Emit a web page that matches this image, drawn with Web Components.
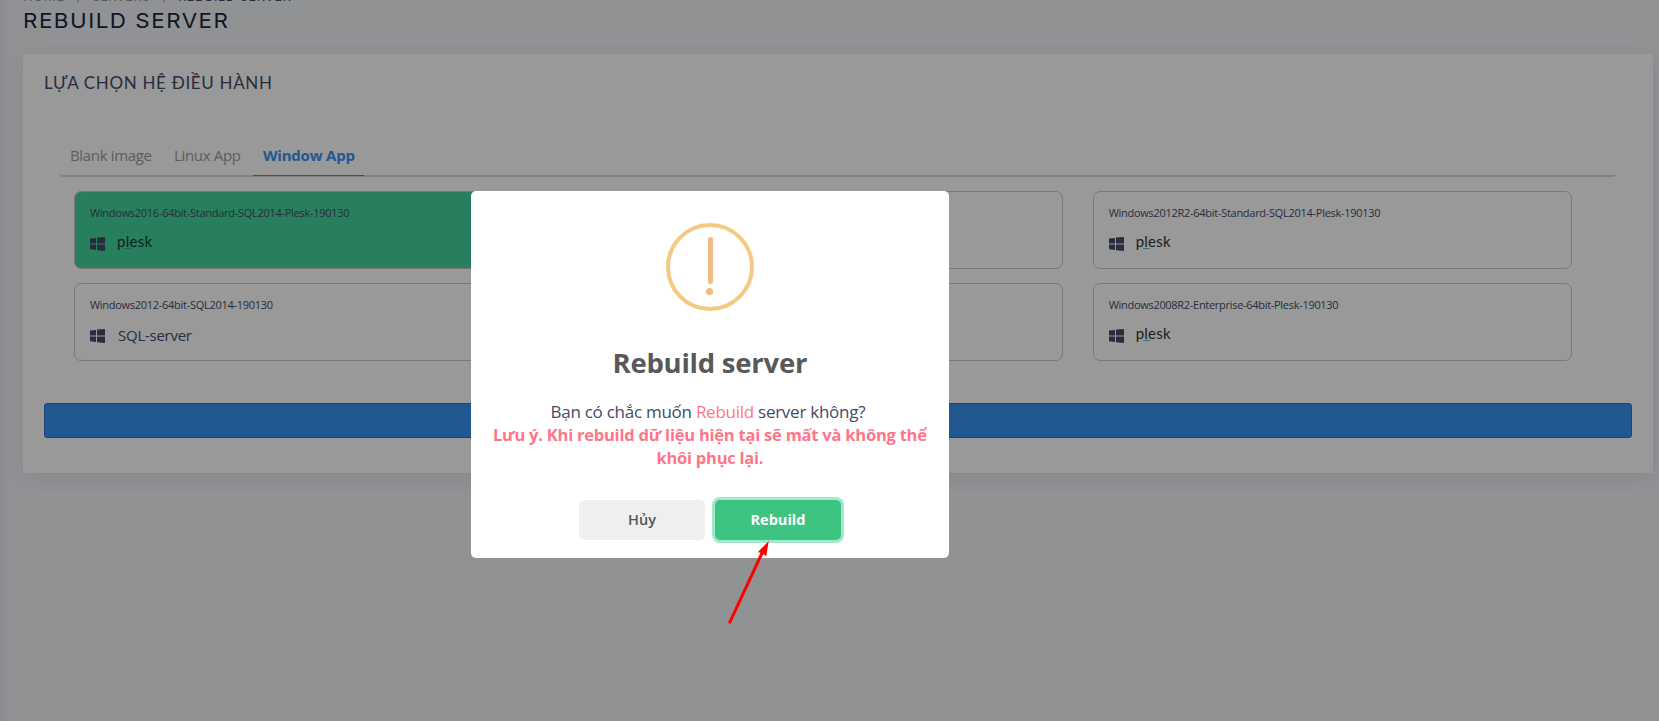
<!DOCTYPE html>
<html lang="vi">
<head>
<meta charset="utf-8">
<title>Rebuild server</title>
<style>
html,body{margin:0;height:100%;overflow:hidden;background:#f2f4f7;font-family:"Open Sans","Noto Sans",sans-serif;color:#434c66}
</style>
</head>
<body>
<rebuild-page></rebuild-page>
<script>
const define = (name, html, setup) => customElements.define(name, class extends HTMLElement {
  connectedCallback() {
    if (this.shadowRoot) return;
    const t = document.createElement('template');
    t.innerHTML = html;
    this.attachShadow({mode: 'open'}).append(t.content.cloneNode(true));
    if (setup) setup(this);
  }
});

/* One line of text, tracked so that it spans the given width; "x" widens the letters themselves. */
define('fit-text', `<style>:host{display:inline-block;white-space:nowrap;vertical-align:top}</style><slot></slot>`, el => {
  const x = parseFloat(el.getAttribute('x')) || 1;
  const target = parseFloat(el.getAttribute('w')) / x;
  const natural = el.getBoundingClientRect().width;
  const gap = (target - natural) / (el.textContent.length - 1);
  el.style.letterSpacing = gap.toFixed(4) + 'px';
  el.style.marginRight = (target * (x - 1) - gap).toFixed(4) + 'px';
  if (x !== 1) {
    el.style.transformOrigin = '0 0';
    el.style.transform = `scaleX(${x})`;
  }
});

define('crumb-bar', `<style>
:host{display:flex;height:16px;margin:-11px 0 0 23px;font:11.5px/16px Inter,sans-serif;color:#8d94a3}
.s{margin:0 12px 0 13px;width:3px} .c{color:#434c66}
</style><fit-text x="1.1" w="41">HOME</fit-text><span class="s">/</span><fit-text x="1.1" w="58">SERVERS</fit-text><span class="s">/</span><fit-text x="1.1" class="c" w="113">REBUILD SERVER</fit-text>`);

define('windows-icon', `<style>:host{display:block;width:15px;height:14px}svg{display:block}</style>
<svg width="15" height="14" viewBox="0 0 15 14"><path fill="#434c66" d="M0 1.6 6 .9V6.5H0ZM7 .4 15 0V6.5H7ZM0 7.4H6V13L0 12.3ZM7 7.4H15V14L7 13.2Z"/></svg>`);

define('plesk-logo', `<style>:host{display:block;position:relative;font:15px/20px Lato,"Open Sans",sans-serif;color:#333;width:36px;height:20px}
i{position:absolute;left:7px;top:17px;width:7px;height:1px;background:#53bce6}
:host([dim]){color:#0b3f2c}:host([dim]) i{background:#4f93b0}</style><fit-text w="35">plesk</fit-text><i></i>`);

define('image-card', `<style>
:host{display:block;box-sizing:border-box;height:78px;border:1px solid #ccc;border-radius:7px;padding:12px 15px 0}
:host([selected]){background:#44d49b}
.n{height:18px;font-size:11px;line-height:18px}
.r{display:flex;align-items:flex-start;margin-top:7px}
windows-icon{margin-top:8px;margin-right:12px}
.sql{display:block;margin:4px 0 0 1px;font-size:15px;line-height:20px}
plesk-logo{margin-top:2px}
</style><div class="n"><slot></slot></div><div class="r"></div>`, el => {
  const r = el.shadowRoot.querySelector('.r'), app = el.getAttribute('app');
  r.innerHTML = '<windows-icon></windows-icon>' + (app === 'sql'
    ? '<span class="sql"><fit-text w="74">SQL-server</fit-text></span>'
    : app === 'plesk' ? `<plesk-logo ${el.hasAttribute('selected') ? 'dim' : ''}></plesk-logo>` : '');
});

define('tab-bar', `<style>
:host{display:flex;box-sizing:border-box;height:37px;margin-left:15px;margin-right:16px;border-bottom:2px solid #dadada;border-radius:0 0 4px 4px;font-size:15px;line-height:30px;color:#9b9b9b}
div{height:36px;box-sizing:border-box;padding:0 11px}
.a{color:#3a93f2;font-weight:700;border-bottom:1px solid #3a93f2;width:111px;padding:0 10px;margin-left:1px}
</style><div><fit-text w="82">Blank image</fit-text></div><div><fit-text w="67">Linux App</fit-text></div><div class="a"><fit-text w="92">Window App</fit-text></div>`);

define('os-panel', `<style>
:host{display:block;box-sizing:border-box;width:1630px;height:419px;margin:0 0 0 23px;padding:17px 21px 0;background:#fff;box-shadow:0 5px 20px rgba(69,65,120,.1)}
h2{margin:0 0 45px;font:17px/24px Lato,"Open Sans",sans-serif;height:24px}
.grid{display:grid;grid-template-columns:repeat(3,1fr);gap:14px 30px;margin:14px 60px 0 30px}
.btn{box-sizing:border-box;height:35px;margin-top:42px;background:#3a93f2;border:1px solid #2d72c8;border-radius:3px}
</style>
<h2><fit-text w="228">LỰA CHỌN HỆ ĐIỀU HÀNH</fit-text></h2>
<tab-bar></tab-bar>
<div class="grid">
<image-card selected app="plesk"><fit-text w="259.5">Windows2016-64bit-Standard-SQL2014-Plesk-190130</fit-text></image-card>
<image-card></image-card>
<image-card app="plesk"><fit-text w="272">Windows2012R2-64bit-Standard-SQL2014-Plesk-190130</fit-text></image-card>
<image-card app="sql"><fit-text w="183">Windows2012-64bit-SQL2014-190130</fit-text></image-card>
<image-card></image-card>
<image-card app="plesk"><fit-text w="230">Windows2008R2-Enterprise-64bit-Plesk-190130</fit-text></image-card>
</div>
<div class="btn"></div>`);

define('warning-icon', `<style>:host{display:block;width:88px;height:88px}svg{display:block}</style>
<svg width="88" height="88" viewBox="0 0 88 88"><circle cx="44" cy="44" r="42" fill="none" stroke="#f4ca82" stroke-width="4"/><rect x="42" y="14" width="5" height="47" rx="2" fill="#f5ba85"/><circle cx="43.5" cy="68.5" r="3.6" fill="#f5ba85"/></svg>`);

define('confirm-dialog', `<style>
:host{display:flex;flex-direction:column;align-items:center;box-sizing:border-box;width:478px;height:367px;background:#fff;border-radius:5px;padding-top:32px}
h1{margin:33px 0 20px;font-size:27.5px;line-height:37px;height:36px;font-weight:700;color:#595959}
.t{display:flex;flex-direction:column;align-items:center;font-size:17px;line-height:23px;color:#434c66}
.t>fit-text{position:relative;left:-2px}
.t b,.t em{color:#ff7588;font-style:normal}.t b{font-weight:700;font-size:16.5px}
.bs{display:flex;gap:10px;margin-top:31px}
.b{width:126px;height:40px;border-radius:5px;text-align:center;font-size:14.5px;line-height:39px;font-weight:600;background:#efefef;color:#555}
.ok{background:#3cc480;color:#fff;font-weight:700;box-shadow:0 0 0 3px #a2e9cb}
</style>
<warning-icon></warning-icon>
<h1><fit-text w="195">Rebuild server</fit-text></h1>
<div class="t"><fit-text w="315">Bạn có chắc muốn <em>Rebuild</em> server không?</fit-text>
<b><fit-text w="434">Lưu ý. Khi rebuild dữ liệu hiện tại sẽ mất và không thể</fit-text></b>
<b><fit-text w="107">khôi phục lại.</fit-text></b></div>
<div class="bs"><div class="b"><fit-text w="28">Hủy</fit-text></div><div class="b ok"><fit-text w="55">Rebuild</fit-text></div></div>`);

define('rebuild-page', `<style>
:host{display:block;position:relative;height:721px;overflow:hidden;background:linear-gradient(90deg,#e5e7ec 0,#eef0f4 6px,#f2f4f7 14px)}
:host::before{content:"";display:table}
h1{margin:3px 0 13px 23px;font:20px/26px Inter,sans-serif;color:#1b2541;height:33px}
.veil{position:absolute;inset:0;background:rgba(0,0,0,.4)}
.veil confirm-dialog{margin:191px 0 0 471px}
.arrow{position:absolute;left:720px;top:535px}
</style>
<crumb-bar></crumb-bar>
<h1><fit-text x="1.12" w="205">REBUILD SERVER</fit-text></h1>
<os-panel></os-panel>
<div class="veil"><confirm-dialog></confirm-dialog></div>
<svg class="arrow" width="60" height="95" viewBox="720 535 60 95"><path d="M729.3 623.3 763 551" stroke="#f00" stroke-width="3"/><path d="M768.7 541 758 552 762.5 553.5 766.3 556.3Z" fill="#f00"/></svg>`);
</script>
</body>
</html>
